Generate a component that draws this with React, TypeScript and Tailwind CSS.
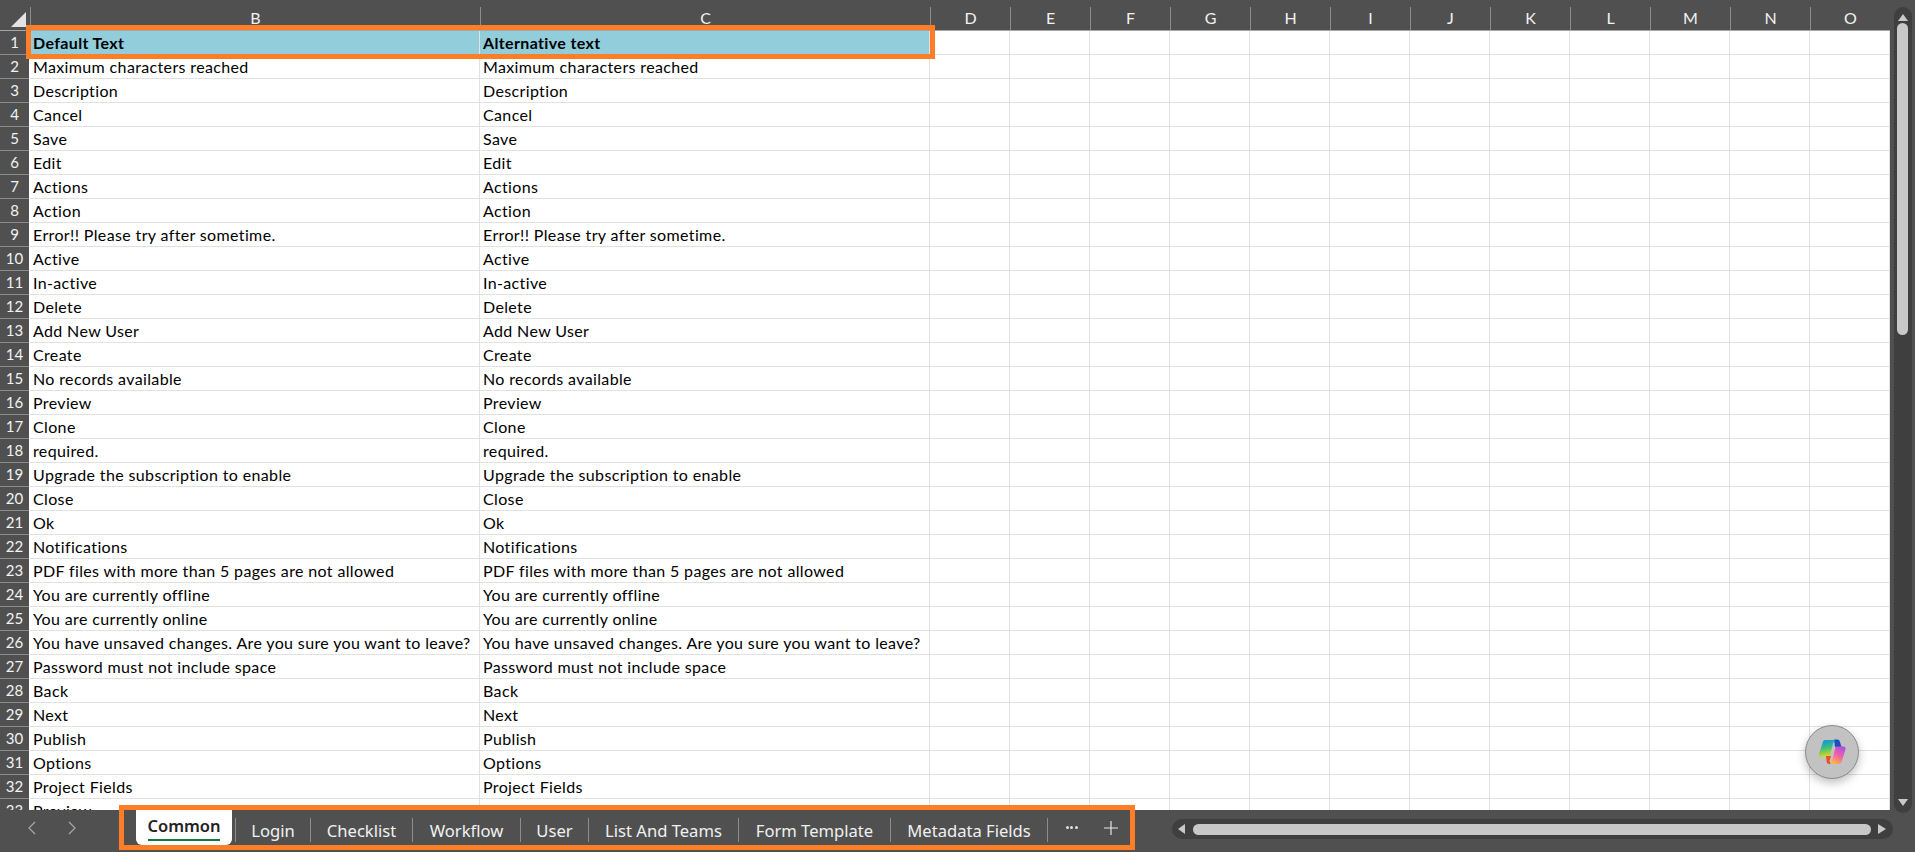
import React from 'react';

const columns = ['D', 'E', 'F', 'G', 'H', 'I', 'J', 'K', 'L', 'M', 'N', 'O'];

const labels = [
  'Default Text',
  'Maximum characters reached',
  'Description',
  'Cancel',
  'Save',
  'Edit',
  'Actions',
  'Action',
  'Error!! Please try after sometime.',
  'Active',
  'In-active',
  'Delete',
  'Add New User',
  'Create',
  'No records available',
  'Preview',
  'Clone',
  'required.',
  'Upgrade the subscription to enable',
  'Close',
  'Ok',
  'Notifications',
  'PDF files with more than 5 pages are not allowed',
  'You are currently offline',
  'You are currently online',
  'You have unsaved changes. Are you sure you want to leave?',
  'Password must not include space',
  'Back',
  'Next',
  'Publish',
  'Options',
  'Project Fields',
  'Preview',
];

const tabs = [
  { name: 'Login', width: 'w-[75px]' },
  { name: 'Checklist', width: 'w-[102px]' },
  { name: 'Workflow', width: 'w-[108px]' },
  { name: 'User', width: 'w-[68px]' },
  { name: 'List And Teams', width: 'w-[150px]' },
  { name: 'Form Template', width: 'w-[152px]' },
  { name: 'Metadata Fields', width: 'w-[157px]' },
];

function CopilotIcon() {
  return (
    <svg width="28" height="26" viewBox="0 0 28 26">
      <defs>
        <linearGradient id="cpA" x1="0.2" y1="0" x2="0.4" y2="1">
          <stop offset="0" stopColor="#0f8fe8" />
          <stop offset="0.5" stopColor="#3fc07a" />
          <stop offset="1" stopColor="#e4d81e" />
        </linearGradient>
        <linearGradient id="cpB" x1="0.8" y1="0" x2="0.3" y2="1">
          <stop offset="0" stopColor="#a84fe0" />
          <stop offset="0.5" stopColor="#f060a8" />
          <stop offset="1" stopColor="#ffb347" />
        </linearGradient>
      </defs>
      <path d="M16 0.5 H19.5 C21 0.5 21.6 1.5 22 3 L23.5 8 H17 Z" fill="#1a4fc4" />
      <path d="M7 1 H17 C16 2 15.5 3 15 5 L12 16.5 C11.7 17.5 11 18 10 18 H3 C1 18 0.5 16.5 1 15 L4.5 4 C5 2 5.8 1 7 1 Z" fill="url(#cpA)" />
      <path d="M8 17 H13 L11.5 22 C11.8 23.5 12.5 24.5 13.5 25 H11 C9.5 25 9 24 8.6 22.5 Z" fill="#e8502a" />
      <path d="M18 7.5 H25.5 C27.3 7.5 27.8 9 27.4 10.5 L24 21.5 C23.5 23.5 22.5 25 21 25 H12 C13 24 13.7 22.5 14.2 21 L17 10 C17.2 8.5 17.5 7.5 18 7.5 Z" fill="url(#cpB)" />
    </svg>
  );
}

export default function App() {
  return (
    <div
      className="relative flex h-[852px] w-[1915px] flex-col overflow-hidden bg-[#505050] text-[15px]"
      style={{ fontFamily: '"Lato", "Noto Sans", sans-serif' }}
    >
      {/* Sheet area */}
      <div className="flex h-[810px] shrink-0">
        <div className="flex w-[1890px] flex-col overflow-hidden">
          {/* Column headers */}
          <div className="flex h-[31px] shrink-0 border-b border-[#a6a6a6] pt-[7px] text-[16px] text-[#f2f2f2]">
            <div className="relative w-[30px] shrink-0">
              <div className="absolute bottom-[3px] right-[4px] h-0 w-0 border-b-[15px] border-l-[15px] border-b-[#e3e3e3] border-l-transparent" />
            </div>
            <div className="flex w-[450px] shrink-0 items-end justify-center border-l border-[#8c8c8c]">B</div>
            <div className="flex w-[450px] shrink-0 items-end justify-center border-l border-[#8c8c8c]">C</div>
            {columns.map((c) => (
              <div key={c} className="flex w-[80px] shrink-0 items-end justify-center border-l border-[#8c8c8c]">
                {c}
              </div>
            ))}
          </div>

          {/* Rows */}
          {labels.map((label, i) => {
            const isHeader = i === 0;
            const second = i === 0 ? 'Alternative text' : label;
            return (
              <div key={i} className="flex h-[24px] shrink-0 text-black">
                <div className="flex w-[29px] shrink-0 items-center justify-center border-b border-[#8c8c8c] bg-[#505050] text-[#f2f2f2]">
                  {i + 1}
                </div>
                <div className={`flex w-[451px] shrink-0 items-center overflow-hidden border-b border-r border-[#e1e1e1] pl-[4px] text-[16px] tracking-[0.36px] whitespace-nowrap ${isHeader ? 'bg-[#92cddc] font-bold' : 'bg-white'}`}>
                  {label}
                </div>
                <div className={`flex w-[450px] shrink-0 items-center overflow-hidden border-b border-r border-[#e1e1e1] pl-[3px] text-[16px] tracking-[0.36px] whitespace-nowrap ${isHeader ? 'bg-[#92cddc] font-bold' : 'bg-white'}`}>
                  {second}
                </div>
                {columns.map((c) => (
                  <div key={c} className="w-[80px] shrink-0 border-b border-r border-[#e1e1e1] bg-white" />
                ))}
              </div>
            );
          })}
        </div>

        {/* Vertical scrollbar */}
        <div className="flex w-[25px] shrink-0 justify-center pt-[7px]">
          <div className="flex h-[806px] w-[18px] flex-col items-center rounded-full bg-[#3f3f3f] pt-[7px]">
            <div className="h-0 w-0 border-x-[5px] border-b-[7px] border-x-transparent border-b-[#c8c8c8]" />
            <div className="mt-[2px] h-[312px] w-[11px] rounded-full bg-[#c8c8c8]" />
            <div className="mt-auto mb-[7px] h-0 w-0 border-x-[5px] border-t-[7px] border-x-transparent border-t-[#c8c8c8]" />
          </div>
        </div>
      </div>

      {/* Sheet tabs */}
      <div className="flex h-[42px] shrink-0 items-start" style={{ fontFamily: '"Noto Sans", sans-serif' }}>
        <div className="flex h-[35px] w-[136px] shrink-0 items-center text-[#a8a8a8]">
          <svg width="12" height="14" viewBox="0 0 12 14" className="ml-[26px]" fill="none" stroke="currentColor" strokeWidth="1.2">
            <path d="M9 1 L3 7 L9 13" />
          </svg>
          <svg width="12" height="14" viewBox="0 0 12 14" className="ml-[28px]" fill="none" stroke="currentColor" strokeWidth="1.2">
            <path d="M3 1 L9 7 L3 13" />
          </svg>
        </div>
        <div className="flex h-[35px] w-[96px] shrink-0 flex-col items-center rounded-b-[6px] bg-white">
          <span className="mt-[3px] text-[16.5px] leading-[26px] font-semibold text-[#222]">Common</span>
          <div className="h-[2px] w-[72px] bg-[#107c41]" />
        </div>
        <div className="mt-[8px] ml-[3px] h-[24px] w-px shrink-0 bg-[#8c8c8c]" />
        {tabs.map((t) => (
          <div
            key={t.name}
            className={`mt-[8px] flex h-[24px] shrink-0 items-center justify-center border-r border-[#8c8c8c] pt-[2px] text-[16.6px] text-[#f0f0f0] ${t.width}`}
          >
            {t.name}
          </div>
        ))}
        <div className="flex h-[35px] w-[47px] shrink-0 items-center justify-center gap-[1.5px]">
          <span className="h-[3px] w-[3px] rounded-full bg-[#e0e0e0]" />
          <span className="h-[3px] w-[3px] rounded-full bg-[#e0e0e0]" />
          <span className="h-[3px] w-[3px] rounded-full bg-[#e0e0e0]" />
        </div>
        <div className="flex h-[35px] w-[32px] shrink-0 items-center justify-center">
          <svg width="14" height="14" viewBox="0 0 14 14" stroke="#e6e6e6" strokeWidth="1.2">
            <path d="M7 0 V14 M0 7 H14" />
          </svg>
        </div>

        {/* Sheet options and horizontal scrollbar */}
        <div className="ml-[23px] flex h-[21px] shrink-0 flex-col items-center justify-center gap-[2px] self-start pt-[20px]">
          <span className="h-[3px] w-[3px] rounded-full bg-[#e0e0e0]" />
          <span className="h-[3px] w-[3px] rounded-full bg-[#e0e0e0]" />
          <span className="h-[3px] w-[3px] rounded-full bg-[#e0e0e0]" />
        </div>
        <div className="mt-[9px] ml-[19px] flex h-[20px] w-[721px] shrink-0 items-center rounded-full bg-[#3f3f3f] pl-[6px]">
          <div className="h-0 w-0 border-y-[5px] border-r-[7px] border-y-transparent border-r-[#c8c8c8]" />
          <div className="ml-[8px] h-[11px] w-[678px] rounded-full bg-[#c8c8c8]" />
          <div className="ml-[7px] h-0 w-0 border-y-[5px] border-l-[8px] border-y-transparent border-l-[#c8c8c8]" />
        </div>
      </div>

      {/* Annotation outlines */}
      <div className="absolute top-[25px] left-[26px] h-[34px] w-[909px] border-[5px] border-[#fd7e26]" />
      <div className="absolute top-[805px] left-[119px] h-[45px] w-[1016px] border-[5px] border-[#fd7e26]" />

      {/* Copilot button */}
      <div className="absolute top-[725px] left-[1805px] flex h-[54px] w-[54px] items-center justify-center rounded-full border border-[#8a8a8a] bg-[#c2c2c2] shadow-[0_4px_10px_rgba(0,0,0,0.25)]">
        <CopilotIcon />
      </div>
    </div>
  );
}
